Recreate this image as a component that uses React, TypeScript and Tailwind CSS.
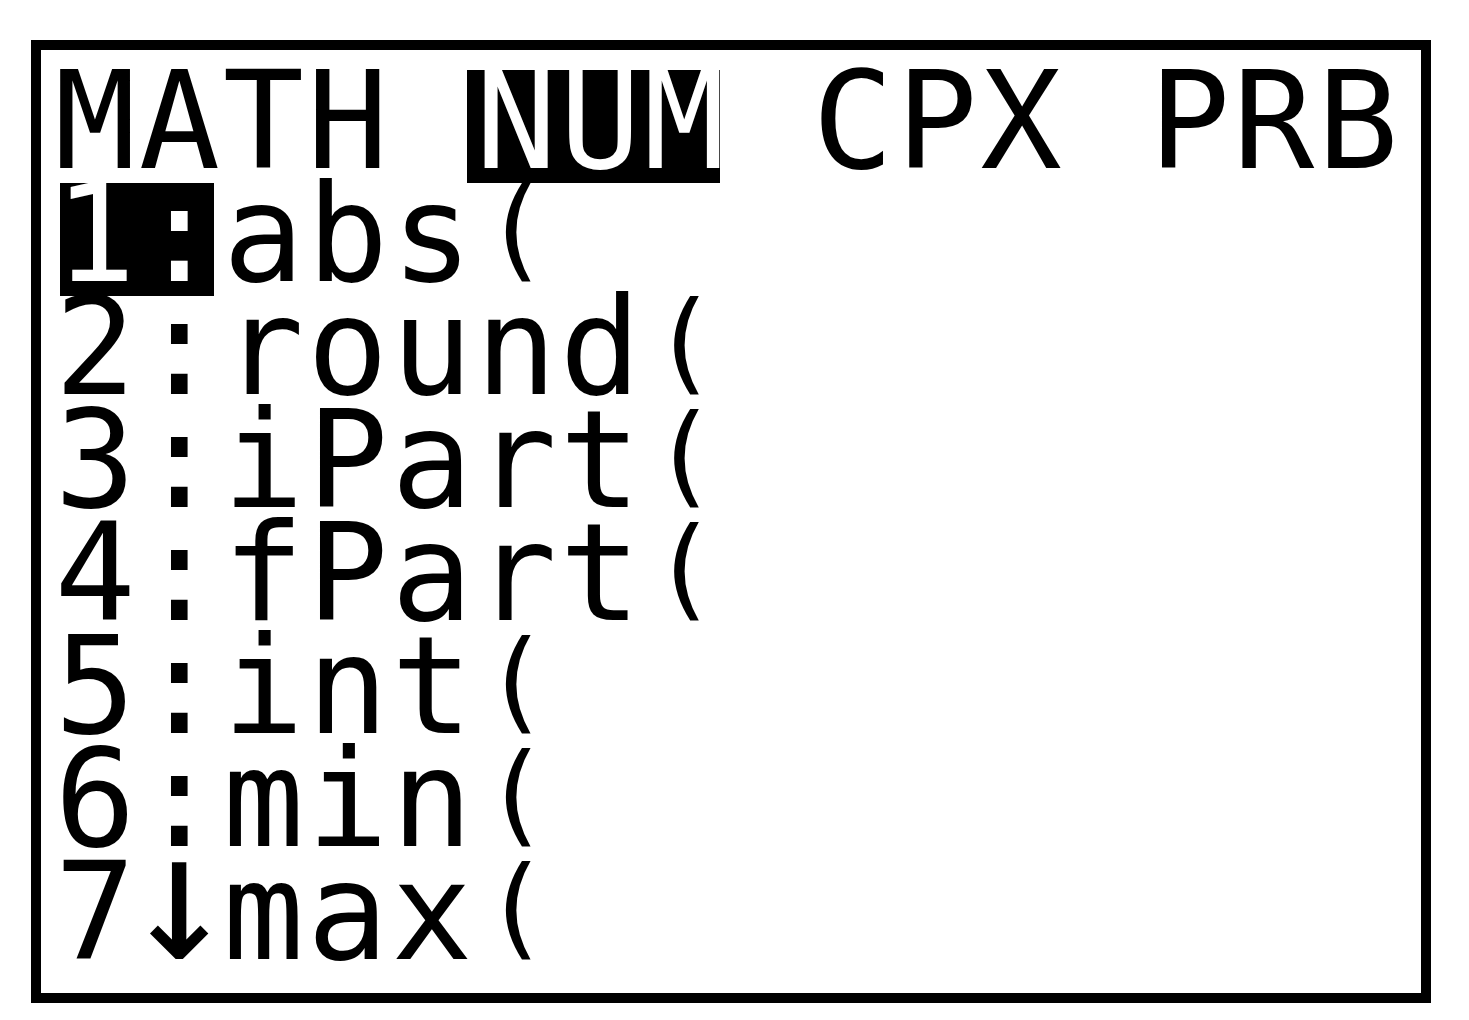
import React from "react";

const ROWS = [
  "MATH NUM CPX PRB",
  "1:abs(",
  "2:round(",
  "3:iPart(",
  "4:fPart(",
  "5:int(",
  "6:min(",
  "7\u2193max(",
];

const HIGHLIGHT: Record<number, number[]> = {
  0: [5, 6, 7],
  1: [0, 1],
};

function glyphClass(ch: string) {
  if (ch === "(") return "text-[110px] leading-[92px]";
  if (ch === "\u2193") return "text-[180px] leading-[72px]";
  return "text-[135px] leading-[103.4px]";
}

function Cell({ ch, hi, first }: { ch: string; hi: boolean; first: boolean }) {
  return (
    <div className="relative h-[113px] w-[84.2px] pr-[14px]">
      {hi && (
        <div
          className={
            "absolute top-0 bottom-0 bg-black " +
            (first ? "left-0 w-[70.2px]" : "left-[-14px] w-[84.2px]")
          }
        />
      )}
      <div
        className={
          "relative flex w-full justify-center whitespace-pre " +
          glyphClass(ch) +
          (hi ? " text-white" : " text-black")
        }
      >
        <span className="shrink-0">{ch}</span>
      </div>
    </div>
  );
}

export default function App() {
  return (
    <div className="w-[1469px] h-[1020px] bg-white pt-[40px] pl-[31px] font-['DejaVu_Sans_Mono',monospace]">
      <div className="w-[1400px] h-[963px] border-[10px] border-black bg-white pl-[19px] pt-[20px]">
        <div className="grid grid-cols-[repeat(16,84.2px)] grid-rows-[repeat(8,113px)] w-[1347.2px] h-[904px]">
          {ROWS.map((row, r) => {
            const chars = Array.from(row.padEnd(16, " ")).slice(0, 16);
            return chars.map((ch, c) => (
              <Cell
                key={r + "-" + c}
                ch={ch}
                first={c === 0}
                hi={(HIGHLIGHT[r] || []).includes(c)}
              />
            ));
          })}
        </div>
      </div>
    </div>
  );
}
